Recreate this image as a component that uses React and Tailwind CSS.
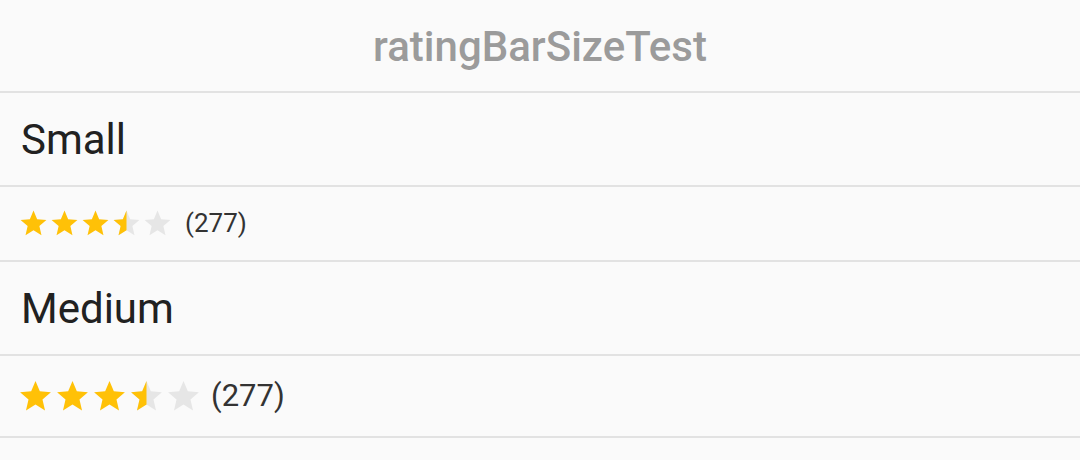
const STAR = 'M12 17.27L18.18 21l-1.64-7.03L22 9.24l-7.19-.61L12 2 9.19 8.63 2 9.24l5.46 4.73L5.82 21z';

function Star({ size, fill, id }) {
  // fill: 0, 0.5 or 1
  return (
    <svg width={size} height={size} viewBox="0 0 24 24" className="shrink-0">
      {fill === 0.5 && (
        <defs>
          <clipPath id={id}>
            <rect x="0" y="0" width="12" height="24" />
          </clipPath>
        </defs>
      )}
      <path d={STAR} fill={fill === 1 ? '#ffc107' : '#e6e6e6'} />
      {fill === 0.5 && <path d={STAR} fill="#ffc107" clipPath={`url(#${id})`} />}
    </svg>
  );
}

function RatingBar({ size, count, textClass, name }) {
  const fills = [1, 1, 1, 0.5, 0];
  return (
    <div className="flex items-center">
      <div className="flex items-center">
        {fills.map((f, i) => (
          <Star key={i} size={size} fill={f} id={`${name}-half-${i}`} />
        ))}
      </div>
      <span className={`text-[#333333] ${textClass}`}>({count})</span>
    </div>
  );
}

export default function App() {
  return (
    <div className="h-[460px] w-[1080px] overflow-hidden bg-[#fafafa]" style={{ fontFamily: 'Roboto, "Liberation Sans", sans-serif' }}>
      <header className="flex h-[93px] items-center justify-center border-b-2 border-[#e2e2e2] pt-[2px]">
        <h1 className="text-[42px] font-medium text-[#9b9b9b]">ratingBarSizeTest</h1>
      </header>

      <div className="flex h-[94px] items-center border-b-2 border-[#e2e2e2] px-[21px] text-[42px] text-[#212121]">Small</div>
      <div className="flex h-[75px] items-center border-b-2 border-[#e2e2e2] pl-[18px]">
        <RatingBar size={31} count={277} name="small" textClass="ml-[12px] text-[26px]" />
      </div>

      <div className="flex h-[94px] items-center border-b-2 border-[#e2e2e2] px-[21px] text-[42px] text-[#212121]">Medium</div>
      <div className="flex h-[82px] items-center border-b-2 border-[#e2e2e2] pl-[17px]">
        <RatingBar size={37} count={277} name="medium" textClass="ml-[9px] text-[31px]" />
      </div>
    </div>
  );
}
